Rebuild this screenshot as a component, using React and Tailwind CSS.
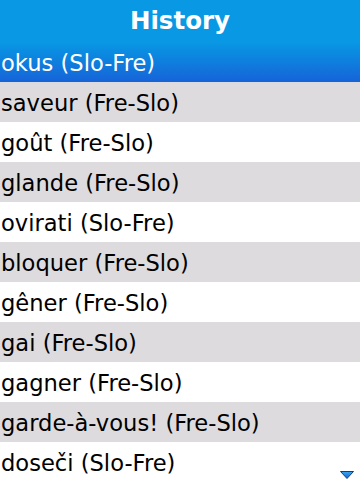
import React from "react";

const items = [
  "okus (Slo-Fre)",
  "saveur (Fre-Slo)",
  "goût (Fre-Slo)",
  "glande (Fre-Slo)",
  "ovirati (Slo-Fre)",
  "bloquer (Fre-Slo)",
  "gêner (Fre-Slo)",
  "gai (Fre-Slo)",
  "gagner (Fre-Slo)",
  "garde-à-vous! (Fre-Slo)",
  "doseči (Slo-Fre)",
];

export default function App() {
  return (
    <div
      className="relative w-[360px] h-[480px] overflow-hidden bg-white"
      style={{ fontFamily: '"DejaVu Sans", Verdana, sans-serif' }}
    >
      <div className="h-[42px] bg-[#0998e4] flex items-center justify-center">
        <span className="text-white font-bold text-[24.5px] leading-none">History</span>
      </div>
      <div className="flex flex-col">
        {items.map((t, i) => {
          const sel = i === 0;
          const cls = sel
            ? "bg-gradient-to-b from-[#0998e4] to-[#1763d8] text-white"
            : i % 2 === 1
            ? "bg-[#dddbde] text-black"
            : "bg-white text-black";
          return (
            <div key={i} className={`h-[40px] shrink-0 flex items-center pl-[1px] pt-[3px] text-[22.6px] leading-none whitespace-nowrap ${cls}`}>
              {t}
            </div>
          );
        })}
      </div>
      <svg className="absolute left-[340px] top-[471px]" width="14" height="8" viewBox="0 0 14 8">
        <defs>
          <linearGradient id="tg" x1="0" y1="0" x2="0" y2="1">
            <stop offset="0" stopColor="#3aa8f0" />
            <stop offset="1" stopColor="#1560d0" />
          </linearGradient>
        </defs>
        <polygon points="0.5,0.5 13.5,0.5 7,7.5" fill="url(#tg)" stroke="#10407a" strokeWidth="1" strokeLinejoin="round" />
      </svg>
    </div>
  );
}
